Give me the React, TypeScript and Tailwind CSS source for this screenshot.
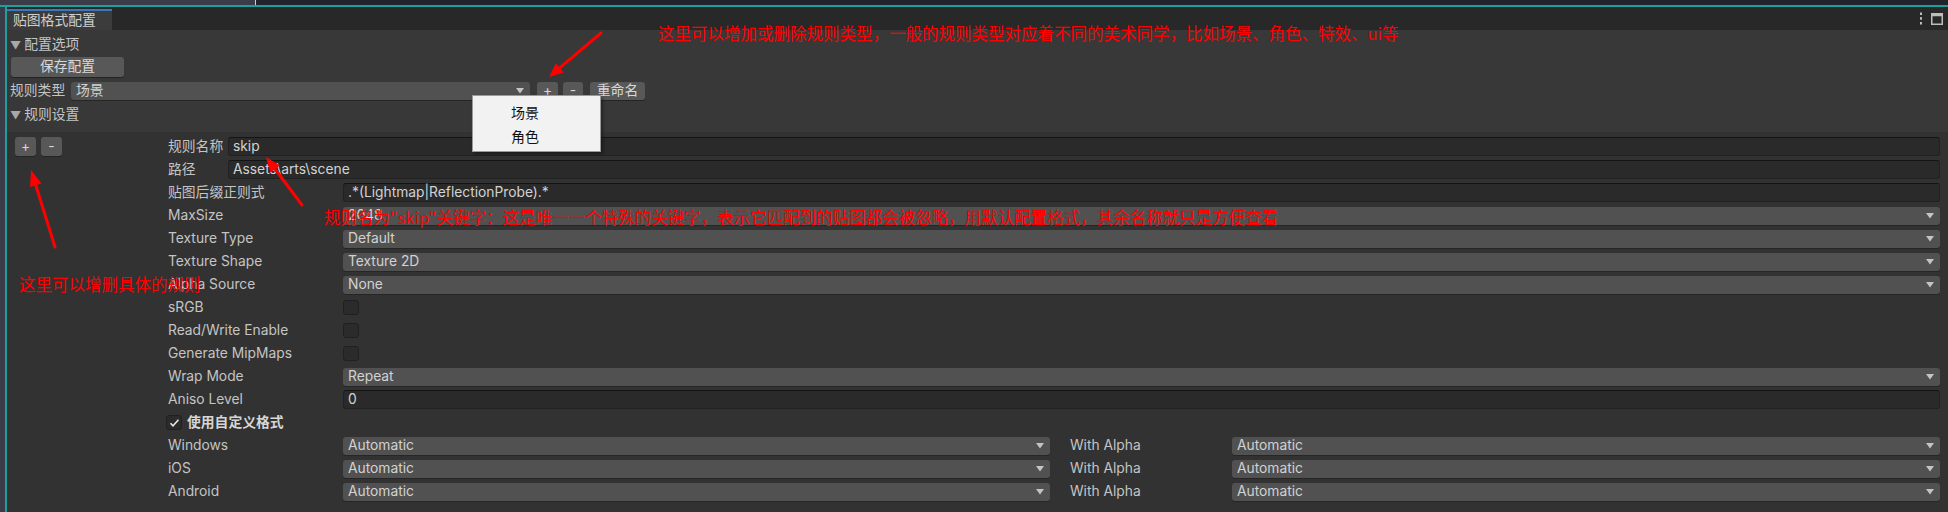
import React from "react";

const Arrow = () => (
  <svg width="8" height="6" viewBox="0 0 8 6" className="shrink-0">
    <polygon points="0,0 8,0 4,5.5" fill="#c4c4c4" />
  </svg>
);

const Dropdown = ({ value, className = "" }: { value: string; className?: string }) => (
  <div
    className={
      "h-[18px] bg-[#515151] rounded-[3px] shadow-[0_1px_0_#262626] flex items-center justify-between pl-[5px] pr-[6px] text-[#d2d2d2] " +
      className
    }
  >
    <span className="whitespace-nowrap leading-none">{value}</span>
    <Arrow />
  </div>
);

const TextField = ({ value, className = "" }: { value: string; className?: string }) => (
  <div
    className={
      "h-[19px] bg-[#2a2a2a] rounded-[3px] border border-[#212121] border-t-[#141414] flex items-center pl-[4px] text-[#d2d2d2] " +
      className
    }
  >
    <span className="whitespace-nowrap leading-none">{value}</span>
  </div>
);

const Check = ({ checked = false }: { checked?: boolean }) => (
  <div className="w-[16px] h-[15px] bg-[#2b2b2b] border border-[#202020] rounded-[3px] flex items-center justify-center">
    {checked && (
      <svg width="11" height="10" viewBox="0 0 11 10">
        <polyline points="1.5,5.2 4,7.8 9.5,1.8" fill="none" stroke="#e6e6e6" strokeWidth="1.6" />
      </svg>
    )}
  </div>
);

const Row = ({ label, children, labelW = "w-[175px]" }: { label: string; children?: React.ReactNode; labelW?: string }) => (
  <div className="h-[23px] flex items-center">
    <div className={labelW + " shrink-0 whitespace-nowrap leading-none"}>{label}</div>
    <div className="flex-1 min-w-0 flex items-center">{children}</div>
  </div>
);

const PlatformRow = ({ label }: { label: string }) => (
  <div className="h-[23px] flex items-center">
    <div className="w-[175px] shrink-0 leading-none">{label}</div>
    <Dropdown value="Automatic" className="w-[707px] shrink-0" />
    <div className="w-[182px] shrink-0 pl-[20px] leading-none">With Alpha</div>
    <Dropdown value="Automatic" className="flex-1 min-w-0" />
  </div>
);

const Btn = ({ children, className = "" }: { children: React.ReactNode; className?: string }) => (
  <div
    className={
      "bg-[#585858] rounded-[3px] shadow-[0_1px_0_#242424] flex items-center justify-center text-[#d8d8d8] leading-none " +
      className
    }
  >
    {children}
  </div>
);

export default function App() {
  return (
    <div className="w-[1948px] h-[512px] overflow-hidden relative bg-[#383838] font-[Inter,'Noto_Sans_CJK_SC',sans-serif] text-[13.8px] text-[#c4c4c4]">
      {/* top strip */}
      <div className="flex h-[5px]">
        <div className="w-[255px] bg-[#3a3c48]" />
        <div className="w-px bg-[#cfcfcf]" />
        <div className="flex-1 bg-[#22242b]" />
      </div>
      <div className="h-[2px] bg-[#1f9e9e]" />
      <div className="flex h-[505px]">
        <div className="w-[5px] bg-[#3a3c48]" />
        <div className="w-[2px] bg-[#1f9e9e]" />
        <div className="flex-1 min-w-0 flex flex-col">
          {/* tab bar */}
          <div className="h-[23px] bg-[#282828] flex items-end justify-between">
            <div className="w-[105px] h-[21px] bg-[#3c3c3c] border-t-2 border-[#3a79bb] pl-[6px] flex items-center text-[#cfcfcf] leading-none">
              贴图格式配置
            </div>
            <div className="self-center flex items-center gap-[8px] pr-[5px]">
              <svg width="4" height="13" viewBox="0 0 4 13">
                <rect x="1" y="0.5" width="2" height="2.5" fill="#bdbdbd" />
                <rect x="1" y="5.2" width="2" height="2.5" fill="#bdbdbd" />
                <rect x="1" y="10" width="2" height="2.5" fill="#bdbdbd" />
              </svg>
              <svg width="12" height="12" viewBox="0 0 12 12">
                <rect x="0.75" y="0.75" width="10.5" height="10.5" fill="none" stroke="#bdbdbd" strokeWidth="1.5" />
                <rect x="0.75" y="0.75" width="10.5" height="2.5" fill="#bdbdbd" />
              </svg>
            </div>
          </div>

          {/* config options */}
          <div className="h-[102px] pt-[5px] flex flex-col">
            <div className="h-[20px] flex items-center pl-[3px] gap-[3px] leading-none">
              <span className="text-[#a8a8a8] text-[11px]">▼</span>
              <span>配置选项</span>
            </div>
            <Btn className="mt-[2px] ml-[4px] h-[20px] w-[113px]">保存配置</Btn>
            <div className="mt-[5px] h-[18px] flex items-center pl-[3px]">
              <div className="w-[61px] shrink-0 leading-none">规则类型</div>
              <Dropdown value="场景" className="w-[459px] shrink-0" />
              <Btn className="ml-[7px] h-[18px] w-[21px]">+</Btn>
              <Btn className="ml-[5px] h-[18px] w-[20px]">-</Btn>
              <Btn className="ml-[7px] h-[18px] w-[55px]">重命名</Btn>
            </div>
            <div className="mt-[5px] h-[20px] flex items-center pl-[3px] gap-[3px] leading-none">
              <span className="text-[#a8a8a8] text-[11px]">▼</span>
              <span>规则设置</span>
            </div>
          </div>

          {/* rules */}
          <div className="flex-1 bg-[#323232] flex">
            <div className="w-[161px] shrink-0 pt-[5px] pl-[8px] flex items-start gap-[5px]">
              <Btn className="h-[19px] w-[21px]">+</Btn>
              <Btn className="h-[19px] w-[21px]">-</Btn>
            </div>
            <div className="flex-1 min-w-0 pr-[8px] pt-[3px] flex flex-col">
              <Row label="规则名称" labelW="w-[60px]">
                <TextField value="skip" className="flex-1" />
              </Row>
              <Row label="路径" labelW="w-[60px]">
                <TextField value={"Assets\\arts\\scene"} className="flex-1" />
              </Row>
              <Row label="贴图后缀正则式">
                <TextField value=".*(Lightmap|ReflectionProbe).*" className="flex-1" />
              </Row>
              <Row label="MaxSize">
                <Dropdown value="2048" className="flex-1" />
              </Row>
              <Row label="Texture Type">
                <Dropdown value="Default" className="flex-1" />
              </Row>
              <Row label="Texture Shape">
                <Dropdown value="Texture 2D" className="flex-1" />
              </Row>
              <Row label="Alpha Source">
                <Dropdown value="None" className="flex-1" />
              </Row>
              <Row label="sRGB">
                <Check />
              </Row>
              <Row label="Read/Write Enable">
                <Check />
              </Row>
              <Row label="Generate MipMaps">
                <Check />
              </Row>
              <Row label="Wrap Mode">
                <Dropdown value="Repeat" className="flex-1" />
              </Row>
              <Row label="Aniso Level">
                <TextField value="0" className="flex-1" />
              </Row>
              <div className="h-[23px] flex items-center -ml-[2px] gap-[5px]">
                <Check checked />
                <span className="font-bold text-[#d6d6d6] leading-none">使用自定义格式</span>
              </div>
              <PlatformRow label="Windows" />
              <PlatformRow label="iOS" />
              <PlatformRow label="Android" />
            </div>
          </div>
        </div>
      </div>

      {/* popup menu */}
      <div className="absolute left-[472px] top-[95px] w-[129px] h-[57px] bg-[#f2f2f2] border border-[#9a9a9a] shadow-[2px_2px_3px_rgba(0,0,0,0.35)] pt-[5px] text-[#111] text-[14px]">
        <div className="h-[24px] flex items-center pl-[38px] leading-none">场景</div>
        <div className="h-[24px] flex items-center pl-[38px] leading-none">角色</div>
      </div>

      {/* annotations */}
      <svg className="absolute left-0 top-0 pointer-events-none" width="1948" height="512">
        <g stroke="#ff0000" strokeWidth="3" strokeLinecap="round">
          <line x1="601" y1="33" x2="559.7" y2="67.9" />
          <line x1="55" y1="247" x2="35.8" y2="185.3" />
          <line x1="302" y1="205" x2="275" y2="169" />
        </g>
        <g fill="#ff0000">
          <polygon points="549,77 563.6,72.5 555.8,63.3" />
          <polygon points="31,170 41.5,183.5 30.1,187.1" />
          <polygon points="266,157 279.8,165.4 270.2,172.6" />
        </g>
      </svg>
      <div className="absolute left-[658px] top-[25px] text-[#ff0000] text-[16.5px] leading-[17px] whitespace-nowrap font-['Noto_Sans_CJK_SC',sans-serif]">
        这里可以增加或删除规则类型，一般的规则类型对应着不同的美术同学，比如场景、角色、特效、ui等
      </div>
      <div className="absolute left-[324px] top-[209px] text-[#ff0000] text-[16.5px] leading-[17px] whitespace-nowrap font-['Noto_Sans_CJK_SC',sans-serif]">
        规则名为"skip"关键字：这是唯一一个特殊的关键字，表示它匹配到的贴图都会被忽略，用默认配置格式，其余名称就只是方便查看
      </div>
      <div className="absolute left-[19px] top-[276px] text-[#ff0000] text-[16.5px] leading-[17px] whitespace-nowrap font-['Noto_Sans_CJK_SC',sans-serif]">
        这里可以增删具体的规则
      </div>
    </div>
  );
}
